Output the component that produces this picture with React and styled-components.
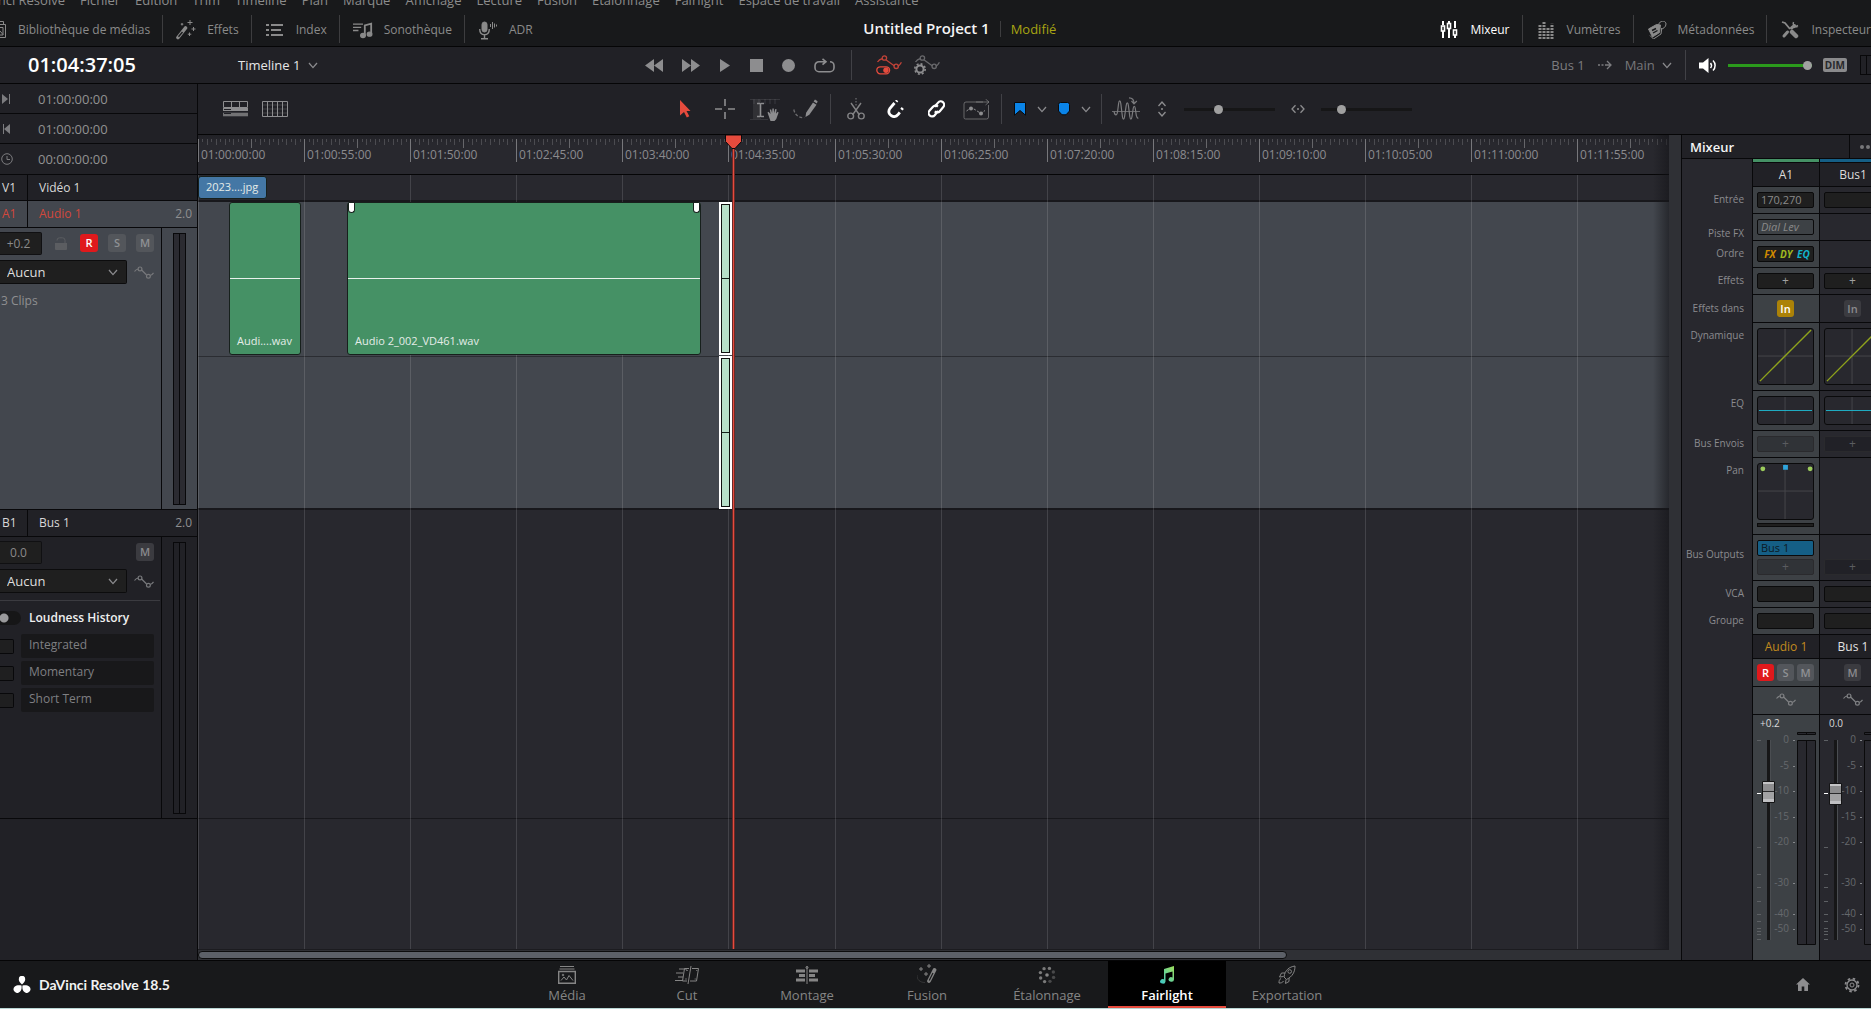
import React from 'react';
import styled, { createGlobalStyle, css } from 'styled-components';

const GlobalStyle = createGlobalStyle`
  * {
    box-sizing: border-box;
  }
  body {
    margin: 0;
    background: #18191b;
    overflow: hidden;
  }
  body, button, input, select {
    font-family: "Open Sans", "Noto Sans", sans-serif;
    font-size: 12px;
    line-height: 16px;
    color: #929292;
  }
  button {
    border: 0;
    padding: 0;
    background: none;
  }
  svg {
    display: block;
    flex: none;
  }
`;

// ---------- data ----------

const START = 3600;
const STEP = 55;
const PX_PER_SEC = 1.929;
const MARKS = 14;

const timecode = (s) => {
  const two = (n) => String(n).padStart(2, '0');
  return `${two(Math.floor(s / 3600))}:${two(Math.floor(s / 60) % 60)}:${two(s % 60)}:00`;
};
const toX = (sec) => Math.round(sec * PX_PER_SEC);

const MENU = ['DaVinci Resolve', 'Fichier', 'Édition', 'Trim', 'Timeline', 'Plan', 'Marque', 'Affichage',
  'Lecture', 'Fusion', 'Étalonnage', 'Fairlight', 'Espace de travail', 'Assistance'];

const SCALE = [['0', 8], ['-5', 34], ['-10', 59], ['-15', 85], ['-20', 110], ['-30', 151], ['-40', 182], ['-50', 197]];
const FADER_TICKS = [8, 115, 142, 155, 169, 182, 189, 196, 199, 202, 207];

// ---------- icons ----------

const Icon = ({ w, h, children, ...rest }) => (
  <svg width={w} height={h} viewBox={`0 0 ${w} ${h}`} fill="none" stroke="currentColor" aria-hidden="true" {...rest}>
    {children}
  </svg>
);

const Chevron = () => <Icon w={10} h={7}><path d="M1 1l4 4.6L9 1" stroke="#8a8a8d" strokeWidth="1.3" /></Icon>;

const CurveIcon = () => (
  <Icon w={20} h={13} strokeWidth="1.2">
    <path d="M.5 5.5C2 3.4 3 3 4.5 3M7.6 4l5 5M16.2 9.4c1.400 0 2.200-1 3.300-2.600" />
    <circle cx="6" cy="2.900" r="1.900" />
    <circle cx="14.400" cy="10.200" r="1.900" />
  </Icon>
);

const MediaPoolIcon = () => (
  <Icon w={20} h={20}>
    <path d="M3 4V1.500h13.500V4M1.500 4.500h17v13h-17zM4 7.500h12v7.500H4z" />
    <path d="M5 14l3.500-4 2.500 3 2-2 3 3.500" />
  </Icon>
);
const WandIcon = () => (
  <Icon w={20} h={20}>
    <path d="M2 17.500L9.500 8" strokeWidth="3.600" strokeLinecap="round" />
    <path d="M2.500 16.800L6.500 12" stroke="#18191b" strokeWidth="1.400" />
    <path d="M14 0v5M11.500 2.500h5M17.500 7v4M15.500 9h4M13.500 12.500v3.500M11.800 14.200h3.500M6 3v2.500M4.800 4.200h2.500" />
  </Icon>
);
const IndexIcon = () => (
  <Icon w={18} h={14} strokeWidth="2">
    <path d="M0 2h3M5 2h12M0 7h3M5 7h10M0 12h3M5 12h12" />
  </Icon>
);
const SoundsIcon = () => (
  <Icon w={22} h={17} strokeWidth="1.500">
    <path d="M0 1.500h11M0 5h9M0 8.500h6" />
    <path d="M13 14V3l7-2v11" strokeWidth="2" />
    <ellipse cx="11" cy="14" rx="2.500" ry="2.200" fill="currentColor" />
    <ellipse cx="18.200" cy="12.500" rx="2.500" ry="2.200" fill="currentColor" />
  </Icon>
);
const MicIcon = () => (
  <Icon w={18} h={19}>
    <rect x="3" y="1" width="5" height="10" rx="2.500" fill="currentColor" />
    <path d="M.7 8c0 4 1.800 5.700 4.800 5.700s4.800-1.700 4.800-5.700M5.500 14v3.500M2 17.800h7" strokeWidth="1.400" />
    <path d="M11.500 3v3M13.500 1v7M15.500 2.500v4M17.500 3.500v2" />
  </Icon>
);
const MixerIcon = () => (
  <Icon w={18} h={18} strokeWidth="1.600">
    <path d="M3 0v4M3 10v7M9 0v2M9 8v9M15 0v7M15 14v3" strokeWidth="2" />
    <rect x="1.500" y="5" width="3" height="5" />
    <rect x="7.500" y="2.500" width="3" height="5" />
    <rect x="13.500" y="9" width="3" height="5" />
  </Icon>
);
const MetersIcon = () => (
  <Icon w={16} h={18} strokeDasharray="2 1" strokeWidth="3">
    <path d="M2 18V4M6 18V0M10 18V7M14 18V2.800" />
  </Icon>
);
const MetadataIcon = () => (
  <Icon w={19} h={18}>
    <path d="M1 8l8-4.500 4 .5-1 7.500L5 16z" fill="currentColor" />
    <path d="M2.500 14.500L6 18l7.500-5 .800-6" />
    <path d="M4.500 9.500l4-2M5.500 12l4.500-2.500" stroke="#18191b" strokeWidth="1.400" />
    <path d="M11 5c0-6 7.500-6 7.500-2 0 3-3 5-5 5" />
  </Icon>
);
const ToolsIcon = () => (
  <Icon w={18} h={18}>
    <path d="M1 1l3 1 5 6" strokeWidth="1.800" />
    <path d="M11 11l4 4" strokeWidth="4.500" strokeLinecap="round" />
    <path d="M10.500 7l3-2.500M6.500 11L3 15" strokeWidth="3" strokeLinecap="round" />
    <path d="M16.500 5.500a3.300 3.300 0 01-4-4.500M13 6.500l4-2" strokeWidth="1.500" />
  </Icon>
);

const RewindIcon = () => <Icon w={18} h={13} fill="currentColor" stroke="none"><path d="M0 6.500L9 0v13zM9 6.500L18 0v13z" /></Icon>;
const ForwardIcon = () => <Icon w={18} h={13} fill="currentColor" stroke="none"><path d="M18 6.500L9 0v13zM9 6.500L0 0v13z" /></Icon>;
const PlayIcon = () => <Icon w={12} h={13} fill="currentColor" stroke="none"><path d="M1 0l10 6.500L1 13z" /></Icon>;
const StopIcon = () => <Icon w={13} h={13} fill="currentColor" stroke="none"><path d="M0 0h13v13H0z" /></Icon>;
const RecordIcon = () => <Icon w={13} h={13} fill="currentColor" stroke="none"><circle cx="6.500" cy="6.500" r="6.500" /></Icon>;
const LoopIcon = () => (
  <Icon w={21} h={15} strokeWidth="1.600">
    <path d="M6 3.700H5a4 4 0 00-4 4v2a4 4 0 004 4h11a4 4 0 004-4v-2a4 4 0 00-4-4M6 3.700h6M8.500.8l3.500 2.900-3.500 3" />
  </Icon>
);
const AutoCurve = () => (
  <>
    <path d="M1.500 7C3 4.500 4.500 4 6.500 3.500M10.200 5l8.300 6M21.600 11c1.500 0 2.600-1.500 3.800-3.800" strokeWidth="1.300" />
    <circle cx="8.400" cy="3" r="2.200" strokeWidth="1.300" />
    <circle cx="20.200" cy="11.300" r="2.200" strokeWidth="1.300" />
  </>
);
const AutomationIcon = () => (
  <Icon w={26} h={20}>
    <g opacity=".8"><AutoCurve /></g>
    <rect x=".8" y="11.800" width="12.800" height="7" rx="3.500" strokeWidth="1.300" />
    <circle cx="10" cy="15.300" r="2.700" fill="currentColor" stroke="none" />
  </Icon>
);
const AutomationSettingsIcon = () => (
  <Icon w={26} h={20}>
    <g opacity=".65"><AutoCurve /></g>
    <circle cx="6" cy="14" r="3.600" strokeWidth="2" />
    <circle cx="6" cy="14" r="5.200" strokeWidth="1.600" strokeDasharray="2 2.080" />
  </Icon>
);
const RouteIcon = () => <Icon w={14} h={10} strokeWidth="1.300"><path d="M0 5h2M3.500 5h2M7 5h6M9 1l4 4-4 4" /></Icon>;
const SpeakerIcon = () => (
  <Icon w={18} h={15}>
    <path d="M0 4.500h4L9.500 0v15L4 10.500H0z" fill="currentColor" stroke="none" />
    <path d="M11.500 5a4 4 0 010 5M14 2.500a7 7 0 010 10" strokeWidth="1.500" />
  </Icon>
);

const TimelineViewIcon = () => (
  <Icon w={25} h={16}>
    <path d="M.5.5h24v6H.5zM8.500.5v6M16.500.5v6" />
    <path d="M0 8.500h25" strokeWidth="3" />
    <path d="M0 13.500h25" strokeWidth="3.600" opacity=".75" />
    <path d="M1 8.500h7M1 12.500h7" stroke="#212126" />
  </Icon>
);
const GridViewIcon = () => (
  <Icon w={26} h={16}>
    <path d="M.5.5h25v15H.5zM5.500 0v16M10.500 0v16M15.500 0v16M20.500 0v16" />
    <path d="M1 4h24M1 8h24M1 12h24" opacity=".3" />
  </Icon>
);
const ArrowToolIcon = () => (
  <Icon w={11} h={18}><path d="M0 0l10.500 11H6.500l2.800 5.300-2.500 1.200L4 12 0 15.500z" fill="currentColor" stroke="none" /></Icon>
);
const CrosshairIcon = () => <Icon w={20} h={20} strokeWidth="1.600"><path d="M10 0v7M10 13v7M0 10h7M13 10h7" /></Icon>;
const RangeIcon = () => (
  <Icon w={30} h={23}>
    <path d="M0 1.500h30M0 21.500h18" opacity=".2" />
    <path d="M4 1v5M9 1v5M15 1v5M20 1v5M25 1v5" opacity=".25" />
    <path d="M3 2h8v19H3z" fill="currentColor" stroke="none" opacity=".15" />
    <path d="M7 5.500h2.500l1 .8 1-.8H14M7 18.500h2.500l1-.8 1 .8H14M10.500 6v12" strokeWidth="1.600" />
    <path d="M17.500 14.500l1-.7 2 2.200-.7-4.500h1.300l1 3.500.3-4.500h1.400l.3 4.500 1.200-4 1.300.3-.6 4.500 1.600-2 1 .6-2.300 6.600-1.800 2h-4z" fill="currentColor" stroke="none" />
  </Icon>
);
const PencilIcon = () => (
  <Icon w={25} h={20}>
    <path d="M.8 10.500c1 5 4 8 10.500 8.200" strokeDasharray="3 1.800" strokeWidth="1.300" opacity=".7" />
    <path d="M12.500 18l.6-4.200L20 3.500l3.500 2.200-7.200 10.100z" fill="currentColor" stroke="none" />
    <path d="M20.600 2.600L22 .500l2.600 1.700-.7 2.400z" fill="currentColor" stroke="none" />
  </Icon>
);
const ScissorsIcon = () => (
  <Icon w={18} h={22} strokeWidth="1.400" opacity=".9">
    <path d="M4 5l8.500 12M14 5L5.500 17" />
    <path d="M9 0v1.500M9 3v1.500M9 6v1.500" strokeWidth="1" />
    <circle cx="3.700" cy="18" r="2.900" />
    <circle cx="14.300" cy="18" r="2.900" />
  </Icon>
);
const MagnetIcon = () => (
  <Icon w={18} h={18} strokeWidth="2.800">
    <path d="M7.500 3L3 8.300c-2.300 3.200-.8 6.200 1.500 7.500 2.500 1.400 5 .6 6.700-1.500l1.600-2" />
    <path d="M9.200 1.600l1-1.200M14.400 9.700l1.400-1.700" />
  </Icon>
);
const LinkIcon = () => (
  <Icon w={17} h={18} strokeWidth="2.200">
    <path d="M6.500 6.800l3.600-4.200a3.400 3.400 0 015.200 4.400l-3.500 4.200a3.400 3.400 0 01-5 .200" />
    <path d="M10 11l-3.300 4.200a3.400 3.400 0 01-5.300-4.400L5 6.800a3.400 3.400 0 014.900-.200" />
  </Icon>
);
const KeyframeBoxIcon = () => (
  <Icon w={27} h={21}>
    <path d="M20 3H3a2 2 0 00-2 2v13.500a1.500 1.500 0 001.500 1.500h21a2 2 0 002-2V6" opacity=".65" />
    <path d="M13 3h13M22.500 0l3.500 3-3.500 3" opacity=".65" />
    <path d="M3.500 12l3.500-2.500 4 .5 7 4.500 4-3" strokeDasharray="2.500 1.500" />
    <circle cx="8" cy="9.500" r="2" fill="currentColor" stroke="none" />
    <circle cx="18" cy="14.500" r="2" fill="currentColor" stroke="none" />
  </Icon>
);
const FlagIcon = () => <Icon w={12} h={14} stroke="#0a0a0c"><path d="M.5.5h11v12.700L6 8.500.5 13.200z" fill="#0a84e8" /></Icon>;
const MarkerIcon = () => (
  <Icon w={12} h={14} stroke="#0a0a0c"><path d="M2.500.5h7a2 2 0 012 2V9L8 12.800H4L.5 9V2.500a2 2 0 012-2z" fill="#0a84e8" /></Icon>
);
const WaveIcon = () => (
  <Icon w={28} h={24} opacity=".85">
    <path d="M0 14.500h28" strokeWidth=".8" />
    <path d="M2 14.500C3 19 4.800 19 5.600 14.500l1-8c.5-3.500 1.700-3.500 2.200 0l1.600 13c.5 3.500 1.700 3.500 2.200 0l1.600-11c.5-3.500 1.700-3.500 2.200 0l1.400 11c.5 3.500 1.700 3.500 2.200 0l1.200-8c.5-3 1.600-3 2.100 0l1 7c.3 1.500 1 2.500 2 3" strokeWidth="1.200" />
    <path d="M17 .800c3 0 5 1.200 5 5.500M19.500 4L22 6.800 24.800 4" strokeWidth="1.200" />
  </Icon>
);
const ZoomVIcon = () => (
  <Icon w={12} h={16} strokeWidth="1.300"><path d="M2.500 5L6 1l3.500 4M2.500 11L6 15l3.500-4M5 8h2" /></Icon>
);
const ZoomHIcon = () => (
  <Icon w={14} h={10} strokeWidth="1.300"><path d="M4.500 1.200L1 5l3.500 3.800M9.500 1.200L13 5 9.500 8.800M6 5h2" /></Icon>
);

const NextIcon = () => <Icon w={10} h={10}><path d="M2 0l6 5-6 5z" fill="currentColor" stroke="none" /><path d="M9.500 0v10" /></Icon>;
const PrevIcon = () => <Icon w={10} h={10}><path d="M10 0L4 5l6 5z" fill="currentColor" stroke="none" /><path d="M3.500 0v10" /></Icon>;
const ClockIcon = () => <Icon w={13} h={12}><circle cx="7" cy="6" r="5.300" /><path d="M7 3v3.500h3" /></Icon>;
const LockIcon = () => (
  <Icon w={15} h={13}>
    <path d="M0 6h12v6a1 1 0 01-1 1H1a1 1 0 01-1-1z" fill="currentColor" stroke="none" />
    <path d="M2 3.500A2.500 2.500 0 014.500.8h3A2.500 2.500 0 0110 3.300V6" />
  </Icon>
);

const LogoIcon = () => (
  <Icon w={18} h={17} fill="#fff" stroke="none">
    <path d="M9 8.500C6.500 6.500 5.700 4.500 5.800 3a3.200 3.200 0 016.400 0c.1 1.500-.7 3.500-3.200 5.500z" />
    <path d="M8.500 9.500c.5 3.200-.3 5.200-1.600 6.300A3.500 3.500 0 111.800 10.500c1.500-1.300 4-1.700 6.700-1z" />
    <path d="M9.500 9.500c-.5 3.200.3 5.200 1.600 6.300a3.500 3.500 0 105.100-5.300c-1.500-1.300-4-1.700-6.700-1z" />
  </Icon>
);
const HomeIcon = () => (
  <Icon w={14} h={13} fill="currentColor" stroke="none"><path d="M7 0L0 6.500h2V13h3.700V8.500h2.600V13H12V6.500h2z" /></Icon>
);
const GearIcon = () => (
  <Icon w={16} h={16}>
    <circle cx="8" cy="8" r="5" strokeWidth="1.300" />
    <circle cx="8" cy="8" r="2" />
    <circle cx="8" cy="8" r="6.500" strokeWidth="1.800" strokeDasharray="2.500 2.600" />
  </Icon>
);

const PageMediaIcon = () => (
  <Icon w={18} h={18}>
    <path d="M2 .5h14M1.500 3h15" />
    <path d="M.700 5.500h16.600v11.800H.700z" strokeWidth="1.400" />
    <path d="M3 14.500l3-3.500 2.500 3L11 9.500l4 5" />
    <circle cx="5" cy="9" r=".8" />
  </Icon>
);
const PageCutIcon = () => (
  <Icon w={25} h={18}>
    <path d="M4 3h8M1 7h7M3 11h5M0 14.500h8" strokeWidth="1.200" />
    <path d="M14 2.500H9.500L7.500 15h4.500M17 2.500h6.500L21.500 15H15M16 0l-3 18" />
    <path d="M11 4.500h2M10 13h2M21 4.500h1.500M19.500 13h1.500" opacity=".7" />
  </Icon>
);
const PageEditIcon = () => (
  <Icon w={22} h={18}>
    <path d="M0 5h9M13 5h9M3 9.500h6M13 9.500h6M0 14h9M13 14h9" strokeWidth="3" />
    <path d="M11 0v18" />
    <circle cx="11" cy="1.500" r="1" />
  </Icon>
);
const PageFusionIcon = () => (
  <Icon w={20} h={20}>
    <path d="M12 17L17.500 6" strokeWidth="3.800" strokeLinecap="round" />
    <path d="M12.200 16.500L16 9" stroke="#18191b" strokeWidth="1.200" />
    <path d="M4 3v4M2 5h4M12 0v4M10 2h4M9 8v4M7 10h4" />
    <path d="M0 11c0 5 3 7.500 8 7.500" opacity=".25" />
  </Icon>
);
const PageColorIcon = () => (
  <Icon w={18} h={18} fill="currentColor" stroke="none">
    <circle cx="9" cy="9" r="1.800" />
    {[0, 45, 90, 135, 180, 225, 270, 315].map((a) => (
      <circle key={a} cx={9 + 7 * Math.cos(a / 57.296 + 0.35)} cy={9 + 7 * Math.sin(a / 57.296 + 0.35)} r="1.700" opacity={a === 0 || a === 45 || a === 315 ? 0.45 : 0.9} />
    ))}
  </Icon>
);
const PageFairlightIcon = () => (
  <Icon w={14} h={18} stroke="none">
    <defs>
      <linearGradient id="note" x1="1" y1="0" x2="0" y2="1">
        <stop offset="0" stopColor="#9fe05a" />
        <stop offset="1" stopColor="#3cc6c8" />
      </linearGradient>
    </defs>
    <path d="M4 3l10-3v13.500a2.700 2.300 0 11-1.500-2.100V5.500l-7 2V15.500A2.700 2.300 0 114 13.300z" fill="url(#note)" />
  </Icon>
);
const PageDeliverIcon = () => (
  <Icon w={18} h={19}>
    <path d="M6 12C7 5 11 2 17 1c0 6-2.500 10.500-8.500 13.500z" />
    <circle cx="11.700" cy="6.500" r="1.800" />
    <path d="M7 8H3.500L1.500 12l4-.5M11 13v3.500L7.500 18.500l.500-4M3 13.500c-2 1-2 3-2 4.500 1.500 0 3.500 0 4.500-2" />
  </Icon>
);

const PAGES = [
  ['Média', PageMediaIcon], ['Cut', PageCutIcon], ['Montage', PageEditIcon], ['Fusion', PageFusionIcon],
  ['Étalonnage', PageColorIcon], ['Fairlight', PageFairlightIcon], ['Exportation', PageDeliverIcon],
];

// ---------- shell ----------

const Shell = styled.div`
  display: flex;
  flex-direction: column;
  height: 100vh;
  overflow: hidden;
  background: #212126;
  white-space: nowrap;
`;

const MenuBar = styled.nav`
  display: flex;
  align-items: flex-end;
  gap: 15px;
  height: 12px;
  padding-bottom: 4px;
  margin-left: -30px;
  background: #18191b;
`;

const MenuItem = styled.button`
  color: #8c8c8c;
  font-size: 13px;
  line-height: 16px;
`;

const TopBar = styled.header`
  display: grid;
  grid-template-columns: minmax(0, 1fr) auto minmax(0, 1fr);
  align-items: center;
  height: 35px;
  padding-right: 18px;
  background: #18191b;
  border-bottom: 1px solid #050506;
`;

const TopGroup = styled.div`
  display: flex;
  align-items: center;
`;

const TopButton = styled.button`
  display: flex;
  align-items: center;
  gap: 11px;
  height: 28px;
  padding: 2px 12px 0 13px;
  color: ${(p) => (p.$on ? '#fff' : '#8a8a8a')};
  & + & {
    border-left: 1px solid #3d3d3f;
  }
  &:first-child {
    padding-left: ${(p) => (p.$clipped ? 0 : 13)}px;
    margin-left: ${(p) => (p.$clipped ? -13 : 0)}px;
  }
  svg {
    width: 20px;
  }
`;

const ProjectTitle = styled.h1`
  margin: 0;
  padding-bottom: 2px;
  font-size: 15px;
  line-height: 20px;
  font-weight: 600;
  color: #f4f4f4;
`;

const TopRight = styled.div`
  display: flex;
  justify-content: space-between;
  align-items: center;
  margin-right: -30px;
`;

const Modified = styled.span`
  margin-left: 10px;
  padding-left: 10px;
  border-left: 1px solid #3d3d3f;
  font-size: 13px;
  color: #a8a412;
`;

const TransportBar = styled.div`
  display: flex;
  align-items: center;
  height: 37px;
  border-bottom: 1px solid #050506;
`;

const Clock = styled.div`
  width: 238px;
  padding-left: 28px;
  font-size: 20px;
  line-height: 24px;
  font-weight: 600;
  color: #fff;
`;

const TimelineButton = styled.button`
  display: flex;
  align-items: center;
  gap: 8px;
  width: 407px;
  color: #e6e6e6;
  font-size: 13px;
`;

const IconRow = styled.div`
  display: flex;
  align-items: center;
  gap: ${(p) => p.$gap}px;
  padding-left: ${(p) => p.$inset || 0}px;
  color: #8d8d8f;
`;

const IconButton = styled.button`
  display: flex;
  align-items: center;
  color: ${(p) => p.$color || '#8d8d8f'};
`;

const ToolButton = styled(IconButton)`
  justify-content: center;
  width: 40px;
  height: 30px;
`;

const Divider = styled.span`
  width: 1px;
  height: 30px;
  margin: 0 ${(p) => p.$gap || 0}px;
  background: #414146;
`;

const Monitor = styled.div`
  display: flex;
  align-items: center;
  margin-left: auto;
  gap: 13px;
  color: #7c7c7f;
  font-size: 13px;
`;

const MonitorSource = styled.button`
  display: flex;
  align-items: center;
  gap: 7px;
  font-size: 13px;
  color: #77777a;
`;

const DimButton = styled.button`
  height: 14px;
  padding: 0 2px;
  border-radius: 2px;
  background: #8a8a8c;
  color: #28282b;
  font-size: 10px;
  line-height: 14px;
  font-weight: 700;
`;

const MiniMeter = styled.div`
  width: 11px;
  height: 20px;
  border: 1px solid #08080a;
  border-right: 0;
  &::after {
    content: '';
    display: block;
    width: 5px;
    height: 18px;
    border-right: 1px solid #08080a;
  }
`;

const Slider = styled.input.attrs({ type: 'range' })`
  appearance: none;
  margin: 0;
  height: 10px;
  width: ${(p) => p.$width}px;
  border-radius: 2px;
  background: linear-gradient(${(p) => p.$track || '#161617'}, ${(p) => p.$track || '#161617'}) center / 100% 3px no-repeat;
  &::-webkit-slider-thumb {
    appearance: none;
    width: 9px;
    height: 9px;
    border-radius: 50%;
    background: #a0a0a0;
  }
`;

// ---------- workspace ----------

const Workspace = styled.main`
  display: flex;
  flex: 1;
  min-height: 0;
`;

const TrackPanel = styled.aside`
  flex: none;
  width: 198px;
  border-right: 1px solid #08080a;
`;

const TimeRow = styled.div`
  display: grid;
  grid-template-columns: 38px 1fr;
  align-items: center;
  height: ${(p) => p.$h || 30}px;
  border-bottom: 1px solid #08080a;
  color: #7c7c7f;
  font-size: 13px;
`;

const TimeValue = styled.span`
  color: #929292;
`;

const TrackHead = styled.div`
  display: flex;
  height: ${(p) => p.$h || 27}px;
  border-bottom: 1px solid #08080a;
  background: ${(p) => (p.$armed ? '#43474e' : '#212126')};
  color: ${(p) => (p.$armed ? '#d2483c' : '#d8d8d8')};
  align-items: center;
`;

const TrackId = styled.span`
  display: flex;
  align-items: center;
  width: 28px;
  height: 100%;
  padding-left: 2px;
  border-right: 1px solid #08080a;
`;

const TrackName = styled.span`
  flex: 1;
  padding-left: 11px;
`;

const TrackFormat = styled.span`
  padding-right: 5px;
  color: #8f8f91;
`;

const TrackBody = styled.div`
  display: flex;
  height: 282px;
  border-bottom: 1px solid #08080a;
  background: ${(p) => (p.$armed ? '#43474e' : '#212126')};
`;

const TrackControls = styled.div`
  flex: 1;
  padding-top: 3px;
`;

const MeterColumn = styled.div`
  display: flex;
  justify-content: center;
  width: 36px;
  padding: 5px 0 4px;
  border-left: 1px solid #08080a;
`;

const Meter = styled.div`
  width: 13px;
  height: 100%;
  border: 1px solid #08080a;
  background: linear-gradient(#08080a, #08080a) center / 1px 100% no-repeat ${(p) => (p.$dark ? '#212126' : '#2b2b31')};
`;

const ControlRow = styled.div`
  display: flex;
  align-items: center;
  height: 24px;
  margin-bottom: 5px;
`;

const LevelInput = styled.input`
  width: 42px;
  height: 23px;
  padding: 0 4px 0 0;
  border: 1px solid #101012;
  border-left: 0;
  border-radius: 0 2px 2px 0;
  background: #1f1f1f;
  color: #8a8a8a;
  text-align: center;
`;

const Spacer = styled.span`
  flex: 1;
`;

const stateColors = {
  rec: css`background: #e0191c; color: #fff;`,
  fx: css`background: #ab8208; color: #fff;`,
};

const SmallButton = styled.button`
  width: ${(p) => p.$size || 18}px;
  height: ${(p) => p.$size || 18}px;
  border-radius: 3px;
  background: ${(p) => (p.$armed ? '#53565b' : '#3b3b40')};
  color: ${(p) => (p.$armed ? '#8f9194' : '#8a8a8d')};
  font-size: 11px;
  line-height: 16px;
  font-weight: 600;
  ${(p) => stateColors[p.$state]}
`;

const ButtonSet = styled.div`
  display: flex;
  align-items: center;
  gap: 10px;
  padding-right: 7px;
  color: ${(p) => (p.$curve ? '#77787b' : '#5b5d61')};
`;

const SelectWrap = styled.label`
  position: relative;
  display: block;
  width: 127px;
  svg {
    position: absolute;
    right: 9px;
    top: 9px;
    pointer-events: none;
  }
`;

const TrackSelect = styled.select`
  appearance: none;
  width: 100%;
  height: 24px;
  padding: 0 0 0 7px;
  border: 1px solid #0c0c0d;
  border-left: 0;
  border-radius: 0 2px 2px 0;
  background: #1f1f1f;
  color: #dedede;
  font-size: 13px;
`;

const ClipCount = styled.p`
  margin: 0;
  padding: 4px 0 0 1px;
  color: #8f8f91;
`;

const Loudness = styled.fieldset`
  display: grid;
  gap: 3px;
  margin: 7px 1px 0 0;
  padding: 0 6px 0 0;
  border: 0;
  border-top: 1px solid #3b3b40;
`;

const LoudnessRow = styled.label`
  display: flex;
  align-items: center;
  gap: 7px;
  height: 24px;
  color: #7f7f82;
`;

const LoudnessToggle = styled(LoudnessRow)`
  height: 30px;
  padding-top: 4px;
  gap: 8px;
  font-weight: 600;
  color: #f0f0f0;
`;

const Toggle = styled.input.attrs({ type: 'checkbox' })`
  appearance: none;
  margin: 0;
  width: 21px;
  height: 14px;
  border-radius: 0 7px 7px 0;
  background: radial-gradient(circle at 4px 7px, #9a9a9c 4px, transparent 5px) #161617;
`;

const CheckBox = styled.input.attrs({ type: 'checkbox' })`
  appearance: none;
  margin: 0;
  width: 14px;
  height: 15px;
  border: 1px solid #08080a;
  border-left: 0;
  border-radius: 0 2px 2px 0;
  background: #1f1f20;
`;

const LoudnessName = styled.span`
  flex: 1;
  height: 24px;
  padding-left: 8px;
  border-radius: 2px;
  line-height: 22px;
  background: #18181a;
`;

const Main = styled.section`
  display: flex;
  flex: 1;
  flex-direction: column;
  min-width: 0;
`;

const ToolBar = styled.div`
  display: flex;
  align-items: center;
  height: 51px;
  padding-left: 25px;
  border-bottom: 1px solid #050506;
`;

const ViewButtons = styled(IconRow)`
  width: 442px;
`;

const Stage = styled.div`
  display: flex;
  flex: 1;
  min-height: 0;
`;

const Timeline = styled.div`
  position: relative;
  display: flex;
  flex: 1;
  flex-direction: column;
  min-width: 0;
  background: #28282e;
  overflow: hidden;
`;

const Ruler = styled.div`
  position: relative;
  height: 40px;
  border-bottom: 1px solid #050506;
  background: linear-gradient(#212126, #28282e 8px);
  overflow: hidden;
  svg {
    position: absolute;
    inset: 0;
  }
`;

const RulerLabel = styled.span`
  position: absolute;
  top: 12px;
  padding-left: 3px;
  color: #8b8b8e;
`;

const Tracks = styled.div`
  position: relative;
  flex: 1;
`;

const Lane = styled.div`
  height: ${(p) => p.$h}px;
  background: ${(p) => (p.$armed ? 'linear-gradient(#2b2d32, #2b2d32) 0 154px / 100% 1px no-repeat #43474e' : '#28282e')};
  border-bottom: ${(p) => p.$line || 2}px solid #18181c;
`;

const GridLines = styled.svg`
  position: absolute;
  inset: 0;
  width: 100%;
  height: 100%;
`;

const Clip = styled.div`
  position: absolute;
  display: flex;
  align-items: flex-end;
  padding: 2px 7px ${(p) => (p.$video ? 3 : 5)}px;
  border: 1px solid #17201c;
  border-radius: 3px;
  font-size: 11px;
  color: #e4ece8;
  background: ${(p) => (p.$video ? '#4477a5' : 'linear-gradient(#e9f1ec, #e9f1ec) 0 75px / 100% 1px no-repeat #459165')};
`;

const SelectedClip = styled.div`
  position: absolute;
  width: 13px;
  height: 153px;
  border: 2px solid #fff;
  background: linear-gradient(#14201a, #14201a) 0 74px / 100% 1px no-repeat #b7dfc8;
  box-shadow: inset 0 0 0 1px #10100f;
`;

const FadeHandle = styled.span`
  position: absolute;
  top: 0;
  ${(p) => p.$side}: 0;
  width: 7px;
  height: 10px;
  border: 1px solid #17201c;
  border-top: 0;
  border-radius: 0 0 4px 4px;
  background: #fff;
`;

const Playhead = styled.div`
  position: absolute;
  top: 0;
  bottom: 11px;
  width: 17px;
  background: linear-gradient(90deg, #6b2a28 0 1px, #e64b3d 1px 2px, #6b2a28 2px) center / 3px 100% no-repeat;
  color: #e64b3d;
`;

const EdgeShade = styled.div`
  position: absolute;
  top: 0;
  right: 0;
  bottom: 11px;
  width: 16px;
  background: linear-gradient(90deg, transparent, rgba(20, 20, 24, 0.6));
`;

const ScrollTrack = styled.div`
  height: 11px;
  padding: 1px 0;
  border-top: 1px solid #1c1c20;
  background: #2f3035;
`;

const ScrollThumb = styled.div`
  width: 74%;
  height: 8px;
  border-radius: 4px;
  border: 1px solid #0c0c0d;
  background: #5c6068;
`;

const Gutter = styled.div`
  width: 12px;
  background: #2f3035;
`;

// ---------- mixer ----------

const Mixer = styled.aside`
  flex: none;
  width: 190px;
  border-left: 1px solid #08080a;
  background: #28282e;
  overflow: hidden;
`;

const MixerHead = styled.div`
  display: flex;
  align-items: center;
  height: 24px;
  padding-left: 8px;
  border-bottom: 1px solid #08080a;
  background: #212126;
  h2 {
    flex: 1;
    margin: 0;
    font-size: 13px;
    line-height: 22px;
    font-weight: 600;
    color: #f4f4f4;
  }
`;

const MoreButton = styled.button`
  width: 22px;
  height: 23px;
  padding-left: 10px;
  border-left: 1px solid #08080a;
  color: #77777a;
`;

const MixerBody = styled.div`
  display: flex;
  height: 100%;
`;

const LabelColumn = styled.div`
  flex: none;
  width: 70px;
  padding-top: 28px;
`;

const RowLabel = styled.div`
  height: ${(p) => p.$h}px;
  padding: ${(p) => p.$top}px 8px 0 0;
  text-align: right;
  font-size: 10px;
  color: #8b8b8e;
`;

const Strip = styled.div`
  flex: none;
  width: 67px;
  border-left: 1px solid #08080a;
  background: ${(p) => (p.$armed ? '#3d4145' : '#28282e')};
`;

const StripHead = styled.div`
  height: 28px;
  border-top: 3px solid ${(p) => p.$color};
  border-bottom: 1px solid #08080a;
  background: #212126;
  box-shadow: inset 0 1px #08080a;
  text-align: center;
  line-height: 26px;
  color: #dcdcdc;
`;

const Cell = styled.div`
  display: flex;
  flex-wrap: wrap;
  align-content: flex-start;
  justify-content: center;
  gap: 3px;
  height: ${(p) => p.$h}px;
  padding: ${(p) => p.$top || 5}px 5px 0 4px;
  border-bottom: 1px solid #08080a;
  color: #7f8083;
`;

const StripInput = styled.input`
  width: 57px;
  height: 16px;
  padding: 0 3px 1px;
  border: 1px solid #0a0a0b;
  border-radius: 2px;
  background: ${(p) => (p.$plain ? 'transparent' : '#1f1f1f')};
  color: #8a8a8a;
  font-size: 11px;
  line-height: 13px;
  font-style: ${(p) => (p.$plain ? 'italic' : 'normal')};
`;

const SlotButton = styled.button`
  width: 57px;
  height: 16px;
  border: 1px solid ${(p) => (p.$faint ? '#2a2a2d' : '#0a0a0b')};
  border-radius: 2px;
  background: ${(p) => (p.$faint ? 'rgba(20, 20, 24, 0.3)' : '#1f1f1f')};
  color: ${(p) => (p.$faint ? '#5a5c60' : '#a0a0a0')};
  line-height: 14px;
`;

const BusButton = styled(SlotButton)`
  padding-left: 3px;
  background: #155f86;
  color: #0c1a24;
  font-size: 11px;
  text-align: left;
`;

const OrderBox = styled(SlotButton)`
  display: flex;
  justify-content: space-around;
  padding: 0 1px 0 4px;
  font-size: 10px;
  font-weight: 700;
  font-style: italic;
`;

const Tint = styled.span`
  color: ${(p) => p.$color};
`;

const Graph = styled.svg`
  border: 1px solid #0a0a0b;
  border-radius: 3px;
  background: #28282e;
`;

const PanBar = styled.div`
  width: 57px;
  height: 4px;
  border: 1px solid #0a0a0b;
  background: #1f1f1f;
`;

const SlotGap = styled.span`
  width: 57px;
  height: 16px;
`;

const StripName = styled.div`
  height: 24px;
  border-bottom: 1px solid #08080a;
  background: #212126;
  text-align: center;
  line-height: 23px;
  color: ${(p) => (p.$armed ? '#c08a1e' : '#e2e2e2')};
`;

const FaderArea = styled.div`
  position: relative;
  height: 245px;
`;

const FaderValue = styled.output`
  display: block;
  height: 17px;
  padding-left: ${(p) => p.$pad}px;
  font-size: 10px;
  color: #dadada;
`;

const FaderScale = styled.svg`
  margin-left: 4px;
  font-size: 10px;
`;

// vertical range input laid over the dB scale
const Fader = styled.input.attrs({ type: 'range' })`
  position: absolute;
  left: 9px;
  top: 25px;
  appearance: none;
  writing-mode: vertical-lr;
  direction: rtl;
  width: 13px;
  height: 200px;
  margin: 0;
  background: linear-gradient(90deg, #161617 0 3px, #4a4d51 3px) center / 4px 100% no-repeat;
  &::-webkit-slider-thumb {
    appearance: none;
    width: 13px;
    height: 22px;
    border: 1px solid #141415;
    border-radius: 1px;
    background: linear-gradient(#c4c4c6 0 2px, #8d8d8f 2px 9px, #2a2a2c 9px 10px, #a2a2a4 10px 17px, #c0c0c3 17px);
  }
`;

// ---------- footer ----------

const Footer = styled.footer`
  display: grid;
  grid-template-columns: 1fr auto 1fr;
  height: 49px;
  padding-right: 17px;
  border-top: 1px solid #050506;
  border-bottom: 1px solid #b9d6d4;
  background: #18191b;
`;

const Brand = styled.div`
  display: flex;
  align-items: center;
  gap: 8px;
  padding-left: 13px;
  font-family: Lato, "Open Sans", sans-serif;
  font-size: 14px;
  font-weight: 700;
  color: #f2f2f2;
`;

const Pages = styled.nav`
  display: flex;
`;

const PageLink = styled.a`
  display: flex;
  flex-direction: column;
  align-items: center;
  justify-content: flex-end;
  gap: 3px;
  width: ${(p) => (p.$on ? 118 : 120)}px;
  margin: 0 ${(p) => (p.$on ? 1 : 0)}px;
  padding-bottom: ${(p) => (p.$on ? 3 : 5)}px;
  border-bottom: ${(p) => (p.$on ? '2px solid #e64b3d' : 0)};
  background: ${(p) => (p.$on ? '#000' : 'transparent')};
  color: ${(p) => (p.$on ? '#fff' : '#858585')};
  font-weight: ${(p) => (p.$on ? 600 : 400)};
  font-size: 13px;
  text-decoration: none;
`;

const FooterRight = styled.div`
  display: flex;
  align-items: center;
  justify-content: flex-end;
  gap: 34px;
  margin-right: -17px;
  padding-right: 11px;
`;

// ---------- parts ----------

function RulerScale() {
  const ticks = [];
  for (let i = 0; i <= MARKS * 24; i++) {
    const x = toX((i * STEP) / 24) + 0.5;
    const kind = i % 24 === 0 ? 27 : i % 12 === 0 ? 13 : i % 2 === 0 ? 10 : 7;
    ticks.push(<path key={i} d={`M${x} 4V${kind}`} stroke={i % 24 === 0 ? '#77777b' : i % 12 === 0 ? '#66666a' : '#4b4b50'} />);
  }
  return (
    <Ruler>
      <svg width="100%" height="39" fill="none" aria-hidden="true">{ticks}</svg>
      {Array.from({ length: MARKS }, (_, i) => (
        <RulerLabel key={i} style={{ left: toX(i * STEP) }}>{timecode(START + i * STEP)}</RulerLabel>
      ))}
    </Ruler>
  );
}

function TrackList() {
  return (
    <TrackPanel>
      <TimeRow><NextIcon /><TimeValue>01:00:00:00</TimeValue></TimeRow>
      <TimeRow><PrevIcon /><TimeValue>01:00:00:00</TimeValue></TimeRow>
      <TimeRow $h={31}><ClockIcon /><TimeValue>00:00:00:00</TimeValue></TimeRow>

      <TrackHead $h={26}><TrackId>V1</TrackId><TrackName>Vidéo 1</TrackName></TrackHead>

      <TrackHead $armed><TrackId>A1</TrackId><TrackName>Audio 1</TrackName><TrackFormat>2.0</TrackFormat></TrackHead>
      <TrackBody $armed>
        <TrackControls>
          <ControlRow>
            <LevelInput aria-label="Niveau Audio 1" defaultValue="+0.2" />
            <Spacer />
            <ButtonSet>
              <LockIcon />
              <SmallButton $state="rec">R</SmallButton>
              <SmallButton $armed>S</SmallButton>
              <SmallButton $armed>M</SmallButton>
            </ButtonSet>
          </ControlRow>
          <ControlRow>
            <SelectWrap>
              <TrackSelect aria-label="Automation Audio 1"><option>Aucun</option></TrackSelect>
              <Chevron />
            </SelectWrap>
            <Spacer />
            <ButtonSet $curve><CurveIcon /></ButtonSet>
          </ControlRow>
          <ClipCount>3 Clips</ClipCount>
        </TrackControls>
        <MeterColumn><Meter /></MeterColumn>
      </TrackBody>

      <TrackHead><TrackId>B1</TrackId><TrackName>Bus 1</TrackName><TrackFormat>2.0</TrackFormat></TrackHead>
      <TrackBody>
        <TrackControls>
          <ControlRow>
            <LevelInput aria-label="Niveau Bus 1" defaultValue="0.0" />
            <Spacer />
            <ButtonSet><SmallButton>M</SmallButton></ButtonSet>
          </ControlRow>
          <ControlRow>
            <SelectWrap>
              <TrackSelect aria-label="Automation Bus 1"><option>Aucun</option></TrackSelect>
              <Chevron />
            </SelectWrap>
            <Spacer />
            <ButtonSet $curve><CurveIcon /></ButtonSet>
          </ControlRow>
          <Loudness>
            <LoudnessToggle><Toggle />Loudness History</LoudnessToggle>
            {['Integrated', 'Momentary', 'Short Term'].map((name) => (
              <LoudnessRow key={name}><CheckBox /><LoudnessName>{name}</LoudnessName></LoudnessRow>
            ))}
          </Loudness>
        </TrackControls>
        <MeterColumn><Meter $dark /></MeterColumn>
      </TrackBody>
    </TrackPanel>
  );
}

function TimelineView() {
  return (
    <Timeline>
      <RulerScale />
      <Tracks>
        <Lane $h={27} />
        <Lane $h={308} $armed />
        <Lane $h={309} $line={1} />
        <GridLines aria-hidden="true">
          {Array.from({ length: MARKS }, (_, i) => (
            <rect key={i} x={toX(i * STEP)} y="0" width="1" height="100%" fill="#fff" opacity=".13" />
          ))}
        </GridLines>
        <Clip $video style={{ left: 0, top: 1, width: 69, height: 23 }}>2023....jpg</Clip>
        <Clip style={{ left: 31, top: 27, width: 72, height: 153 }}>Audi....wav</Clip>
        <Clip style={{ left: 149, top: 27, width: 354, height: 153 }}>
          <FadeHandle $side="left" />
          <FadeHandle $side="right" />
          Audio 2_002_VD461.wav
        </Clip>
        <SelectedClip style={{ left: 521, top: 27 }} />
        <SelectedClip style={{ left: 521, top: 181 }} />
      </Tracks>
      <EdgeShade />
      <Playhead style={{ left: toX(277.5) - 8 }}>
        <Icon w={17} h={14} stroke="#0a0a0c"><path d="M.5 0h16v6.500L10 13.500H7L.5 6.500z" fill="#e64b3d" /></Icon>
      </Playhead>
      <ScrollTrack><ScrollThumb /></ScrollTrack>
    </Timeline>
  );
}

function ChannelStrip({ id, color, armed, name, level, value, children }) {
  return (
    <Strip $armed={armed}>
      <StripHead $color={color}>{id}</StripHead>
      <Cell $h={27}><StripInput aria-label={`Entrée ${id}`} defaultValue={armed ? '170,270' : ''} /></Cell>
      <Cell $h={27}>{armed && <StripInput $plain aria-label="Piste FX" defaultValue="Dial Lev" />}</Cell>
      <Cell $h={27}>
        {armed && (
          <OrderBox><Tint $color="#d08a00">FX</Tint><Tint $color="#9fb81f">DY</Tint><Tint $color="#12b5cc">EQ</Tint></OrderBox>
        )}
      </Cell>
      <Cell $h={27}><SlotButton>+</SlotButton></Cell>
      <Cell $h={28}><SmallButton $size={17} $state={armed ? 'fx' : undefined}>In</SmallButton></Cell>
      <Cell $h={68}>
        <Graph width="57" height="57" viewBox="0 0 57 57">
          <path d="M28 0v57M0 28h57" stroke="#46474b" />
          <path d="M2 54L55 1" stroke="#8fa31c" strokeWidth="1.400" />
        </Graph>
      </Cell>
      <Cell $h={40}>
        <Graph width="57" height="29" viewBox="0 0 57 29">
          <path d="M28 0v29" stroke="#46474b" />
          <path d="M0 14.500h57" stroke="#1fb6cc" />
        </Graph>
      </Cell>
      <Cell $h={27}><SlotButton $faint>+</SlotButton></Cell>
      <Cell $h={77}>
        {armed && (
          <>
            <Graph width="57" height="57" viewBox="0 0 57 57">
              <path d="M28 0v57M0 28h57" stroke="#46474b" />
              <circle cx="5" cy="5" r="2.500" fill="#9ccc5c" />
              <circle cx="54" cy="5" r="2.500" fill="#9ccc5c" />
              <path d="M26 1h5v5h-5z" fill="#2fa5dc" />
            </Graph>
            <PanBar />
          </>
        )}
      </Cell>
      <Cell $h={46}>
        {children}
        <SlotButton $faint>+</SlotButton>
      </Cell>
      <Cell $h={27}><SlotButton aria-label="VCA" /></Cell>
      <Cell $h={27}><SlotButton aria-label="Groupe" /></Cell>
      <StripName $armed={armed}>{name}</StripName>
      <Cell $h={28}>
        {armed && <SmallButton $size={17} $state="rec">R</SmallButton>}
        {armed && <SmallButton $size={17} $armed>S</SmallButton>}
        <SmallButton $size={17} $armed={armed}>M</SmallButton>
      </Cell>
      <Cell $h={28} $top={6}><CurveIcon /></Cell>
      <FaderArea>
        <FaderValue $pad={armed ? 7 : 9}>{level}</FaderValue>
        <FaderScale width="60" height="214" viewBox="0 0 60 214" fill="none" stroke="#5d6064">
          {FADER_TICKS.map((y) => <path key={y} d={`M0 ${y + 0.5}h4`} />)}
          <path d="M0 61.500h4" stroke="#fff" />
          {SCALE.map(([label, y]) => (
            <g key={label}>
              <text x="32" y={y + 3} textAnchor="end" fill="#66696d" stroke="none">{label}</text>
              <path d={`M36 ${y + 0.5}h2`} stroke="#85888c" />
            </g>
          ))}
          <path d="M40.500.5h18v2h-18zM40.500 8.500h18v204h-18zM49.500.5v2M49.500 8.500v204" stroke="#0a0a0b" fill="#28282e" />
        </FaderScale>
        <Fader aria-label={`Niveau ${name}`} min="0" max="100" step="any" defaultValue={value} />
      </FaderArea>
    </Strip>
  );
}

const ROWS = [
  ['Entrée', 27, 4], ['Piste FX', 27, 11], ['Ordre', 27, 4], ['Effets', 27, 4], ['Effets dans', 28, 5],
  ['Dynamique', 68, 4], ['EQ', 40, 4], ['Bus Envois', 27, 4], ['Pan', 77, 4], ['Bus Outputs', 46, 11],
  ['VCA', 27, 4], ['Groupe', 27, 4],
];

function MixerPanel() {
  return (
    <Mixer>
      <MixerHead>
        <h2>Mixeur</h2>
        <MoreButton aria-label="Options">
          <Icon w={16} h={4} fill="currentColor" stroke="none">
            <circle cx="2" cy="2" r="2" />
            <circle cx="8" cy="2" r="2" />
            <circle cx="14" cy="2" r="2" />
          </Icon>
        </MoreButton>
      </MixerHead>
      <MixerBody>
        <LabelColumn>
          {ROWS.map(([label, h, top]) => <RowLabel key={label} $h={h} $top={top}>{label}</RowLabel>)}
        </LabelColumn>
        <ChannelStrip id="A1" color="#459165" armed name="Audio 1" level="+0.2" value={77}>
          <BusButton>Bus 1</BusButton>
        </ChannelStrip>
        <ChannelStrip id="Bus1" color="#155f86" name="Bus 1" level="0.0" value={76}>
          <SlotGap />
        </ChannelStrip>
      </MixerBody>
    </Mixer>
  );
}

function App() {
  return (
    <Shell>
      <GlobalStyle />
      <MenuBar>
        {MENU.map((item) => <MenuItem key={item}>{item}</MenuItem>)}
      </MenuBar>

      <TopBar>
        <TopGroup>
          <TopButton $clipped><MediaPoolIcon />Bibliothèque de médias</TopButton>
          <TopButton><WandIcon />Effets</TopButton>
          <TopButton><IndexIcon />Index</TopButton>
          <TopButton><SoundsIcon />Sonothèque</TopButton>
          <TopButton><MicIcon />ADR</TopButton>
        </TopGroup>
        <ProjectTitle>Untitled Project 1</ProjectTitle>
        <TopRight>
          <Modified>Modifié</Modified>
          <TopGroup>
            <TopButton $on><MixerIcon />Mixeur</TopButton>
            <TopButton><MetersIcon />Vumètres</TopButton>
            <TopButton><MetadataIcon />Métadonnées</TopButton>
            <TopButton><ToolsIcon />Inspecteur</TopButton>
          </TopGroup>
        </TopRight>
      </TopBar>

      <TransportBar>
        <Clock>01:04:37:05</Clock>
        <TimelineButton>Timeline 1<Chevron /></TimelineButton>
        <IconRow $gap={19}>
          <IconButton aria-label="Retour"><RewindIcon /></IconButton>
          <IconButton aria-label="Avance"><ForwardIcon /></IconButton>
          <IconButton aria-label="Lecture"><PlayIcon /></IconButton>
          <IconButton aria-label="Stop"><StopIcon /></IconButton>
          <IconButton aria-label="Enregistrer"><RecordIcon /></IconButton>
          <IconButton aria-label="Boucle"><LoopIcon /></IconButton>
        </IconRow>
        <Divider $gap={16} />
        <IconRow $gap={12} $inset={8}>
          <IconButton aria-label="Automation" $color="#e64b3d"><AutomationIcon /></IconButton>
          <IconButton aria-label="Options d'automation"><AutomationSettingsIcon /></IconButton>
        </IconRow>
        <Monitor>
          <span>Bus 1</span>
          <RouteIcon />
          <MonitorSource>Main<Chevron /></MonitorSource>
          <Divider />
          <IconRow $gap={11}>
            <IconButton aria-label="Muet" $color="#fff"><SpeakerIcon /></IconButton>
            <Slider aria-label="Volume" $width={84} $track="#2b9a1c" defaultValue={100} />
            <DimButton>DIM</DimButton>
          </IconRow>
          <MiniMeter />
        </Monitor>
      </TransportBar>

      <Workspace>
        <TrackList />
        <Main>
          <ToolBar>
            <ViewButtons $gap={14}>
              <IconButton aria-label="Vue timeline"><TimelineViewIcon /></IconButton>
              <IconButton aria-label="Vue grille"><GridViewIcon /></IconButton>
            </ViewButtons>
            <IconRow $gap={0}>
              <ToolButton aria-label="Sélection" $color="#e64b3d"><ArrowToolIcon /></ToolButton>
              <ToolButton aria-label="Point"><CrosshairIcon /></ToolButton>
              <ToolButton aria-label="Plage"><RangeIcon /></ToolButton>
              <ToolButton aria-label="Crayon"><PencilIcon /></ToolButton>
            </IconRow>
            <Divider $gap={5} />
            <IconRow $gap={0}>
              <ToolButton aria-label="Couper"><ScissorsIcon /></ToolButton>
              <ToolButton aria-label="Aimant" $color="#fff"><MagnetIcon /></ToolButton>
              <ToolButton aria-label="Lier" $color="#fff"><LinkIcon /></ToolButton>
              <ToolButton aria-label="Courbes"><KeyframeBoxIcon /></ToolButton>
            </IconRow>
            <Divider $gap={5} />
            <IconRow $gap={11} $inset={7}>
              <IconButton aria-label="Drapeau"><FlagIcon /></IconButton>
              <IconButton aria-label="Couleur du drapeau"><Chevron /></IconButton>
              <IconButton aria-label="Marqueur"><MarkerIcon /></IconButton>
              <IconButton aria-label="Couleur du marqueur"><Chevron /></IconButton>
            </IconRow>
            <Divider $gap={10} />
            <IconRow $gap={16}>
              <IconButton aria-label="Forme d'onde"><WaveIcon /></IconButton>
              <ZoomVIcon />
              <Slider aria-label="Zoom vertical" $width={91} defaultValue={36} />
              <ZoomHIcon />
              <Slider aria-label="Zoom horizontal" $width={91} defaultValue={20} />
            </IconRow>
          </ToolBar>
          <Stage>
            <TimelineView />
            <Gutter />
            <MixerPanel />
          </Stage>
        </Main>
      </Workspace>

      <Footer>
        <Brand><LogoIcon />DaVinci Resolve 18.5</Brand>
        <Pages>
          {PAGES.map(([name, PageIcon]) => (
            <PageLink key={name} href={`#${name}`} $on={name === 'Fairlight'}><PageIcon />{name}</PageLink>
          ))}
        </Pages>
        <FooterRight>
          <IconButton aria-label="Accueil"><HomeIcon /></IconButton>
          <IconButton aria-label="Réglages"><GearIcon /></IconButton>
        </FooterRight>
      </Footer>
    </Shell>
  );
}

export default App;
